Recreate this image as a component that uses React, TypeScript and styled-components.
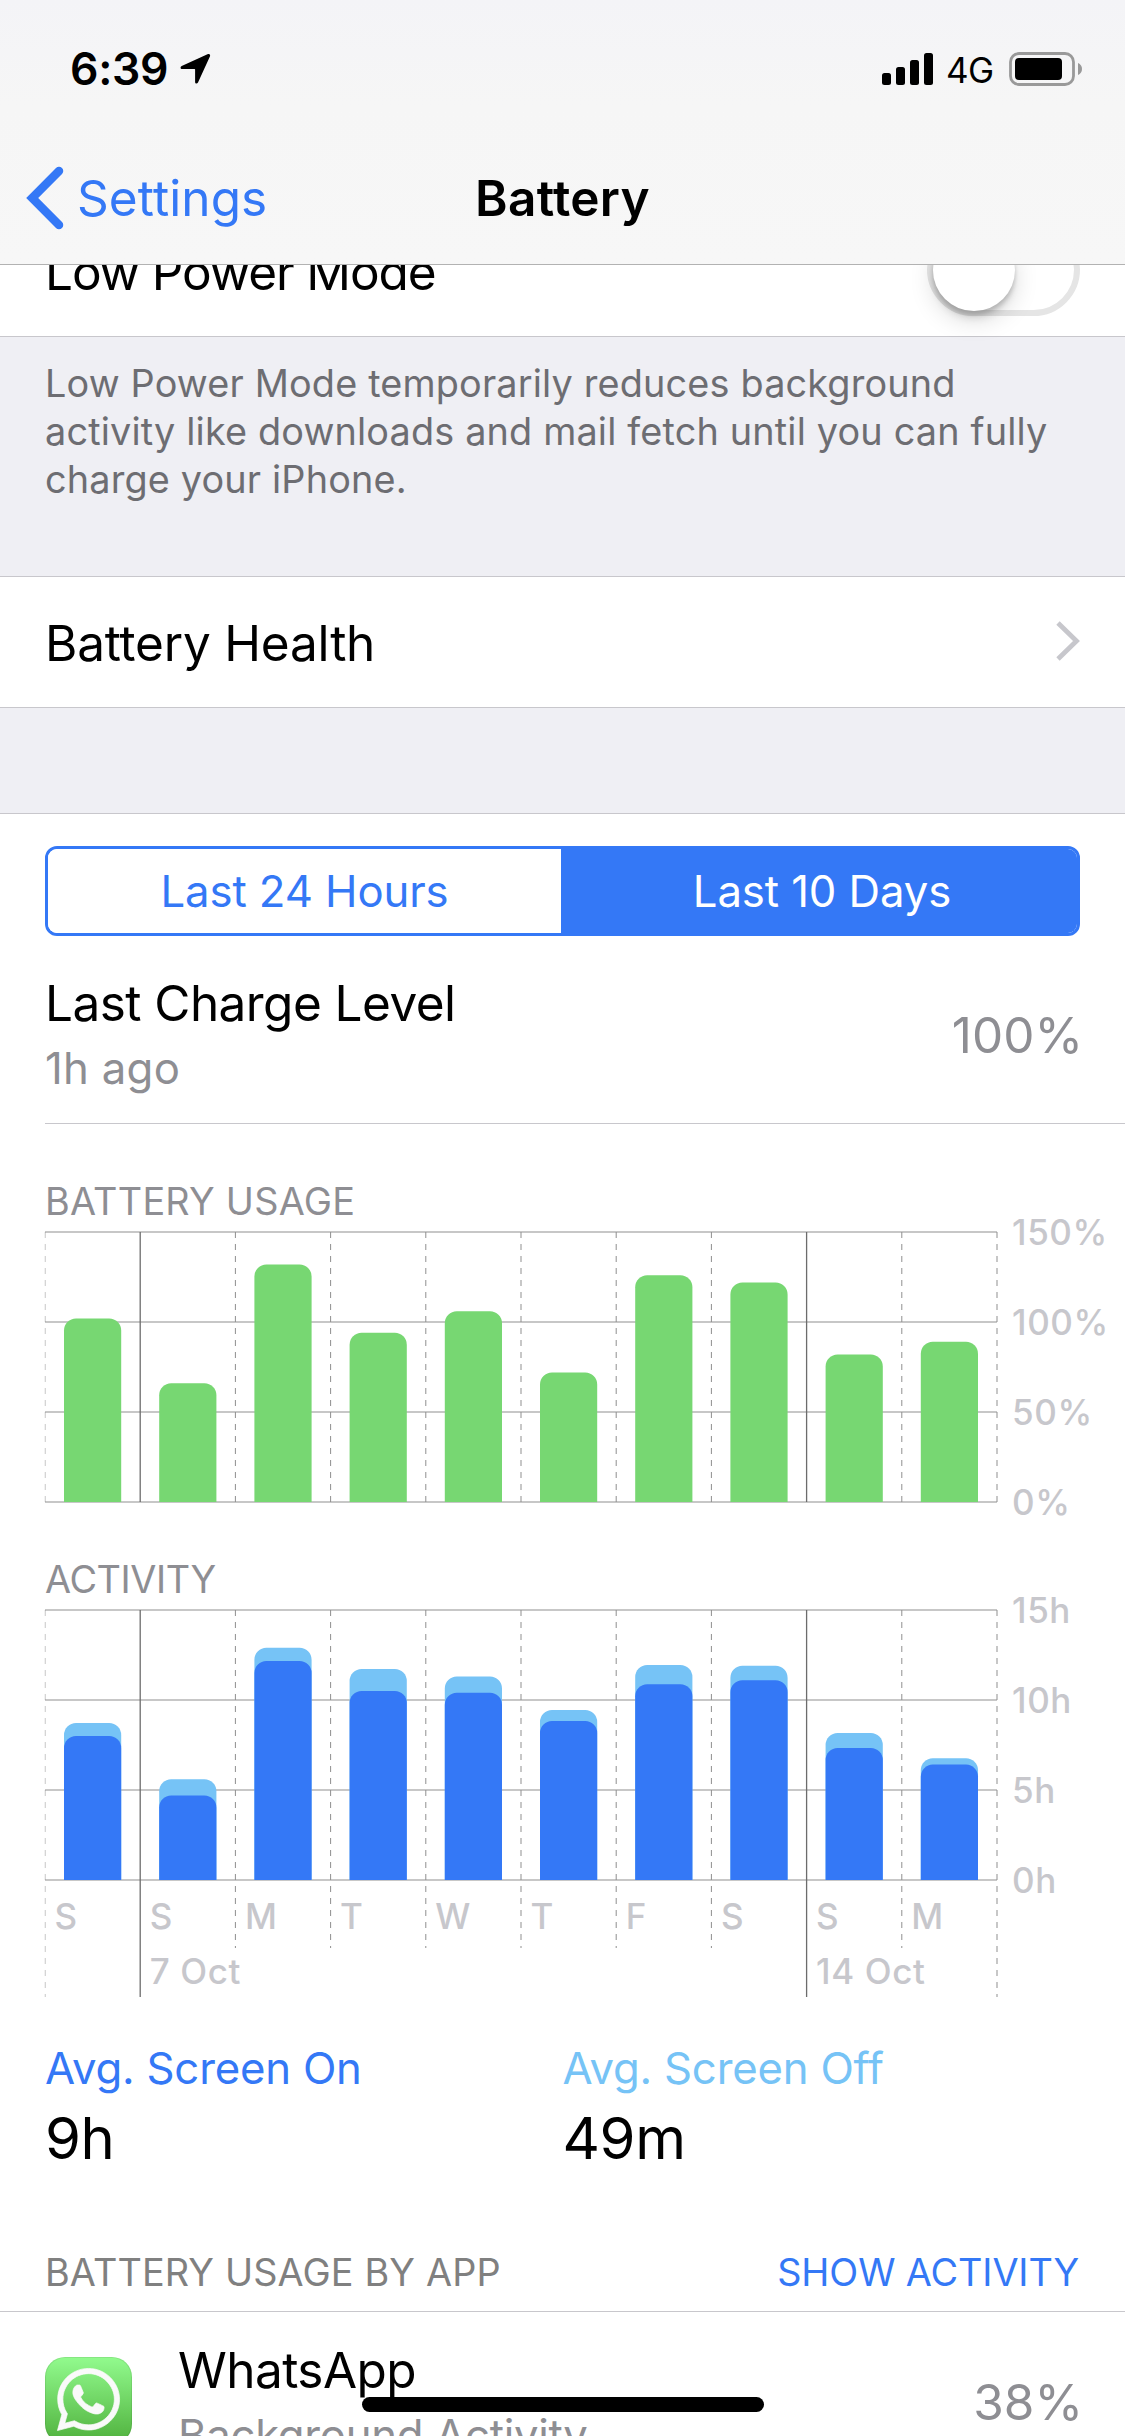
import styled, { createGlobalStyle } from 'styled-components'
import { FaWhatsapp } from 'react-icons/fa'

const colors = {
  blue: '#3478f6',
  sky: '#76c3f6',
  green: '#77d772',
  text: '#000',
  gray: '#8e8e93',
  note: '#6d6d72',
  axis: '#c7c7cc',
  separator: '#c8c7cc',
  grid: '#8f8f8f',
  page: '#efeff4',
}

const fontFamily = "Inter, 'Liberation Sans', sans-serif"

const GlobalStyle = createGlobalStyle`
  * {
    box-sizing: border-box;
  }
  body {
    margin: 0;
    background: ${colors.page};
    font-family: ${fontFamily};
    color: ${colors.text};
  }
`

const Screen = styled.div`
  position: relative;
  display: flex;
  flex-direction: column;
  width: 1125px;
  height: 2436px;
  overflow: hidden;
  background: ${colors.page};
`

const Header = styled.header`
  position: relative;
  z-index: 1;
  flex: none;
  height: 265px;
  background: linear-gradient(#f4f4f7, #f6f6f6 40%, #f7f7f7);
  border-bottom: 1px solid #b2b2b2;
`

const StatusBar = styled.div`
  display: flex;
  align-items: center;
  height: 132px;
  padding: 6px 42px 0 70px;
`

const Time = styled.span`
  width: 110px;
  font-size: 44.5px;
  font-weight: 600;
  line-height: 54px;
  letter-spacing: -0.3px;
`

const StatusIcons = styled.div`
  display: flex;
  align-items: center;
  margin-left: auto;
`

const Network = styled.span`
  width: 75px;
  padding: 2px 0 0 12px;
  font-size: 35px;
  line-height: 42px;
  letter-spacing: -0.5px;
`

const NavBar = styled.nav`
  display: grid;
  grid-template-columns: 1fr auto 1fr;
  align-items: center;
  height: 132px;
  padding: 0 25px;
`

const BackButton = styled.a`
  display: flex;
  align-items: center;
  gap: 13px;
  font-size: 49.5px;
  line-height: 60px;
  letter-spacing: 0.1px;
  color: ${colors.blue};
`

const NavTitle = styled.h1`
  margin: 0;
  font-size: 49.5px;
  font-weight: 600;
  line-height: 60px;
  letter-spacing: 0.3px;
`

const Cell = styled.div<{ $scrolled?: boolean }>`
  display: flex;
  flex: none;
  align-items: center;
  justify-content: space-between;
  height: 132px;
  margin-top: ${(p) => (p.$scrolled ? '-60px' : '0')};
  padding: 2px 45px 0;
  background: #fff;
  border: solid ${colors.separator};
  border-width: 1px 0;
`

const CellTitle = styled.span<{ $track?: number }>`
  font-size: 49.5px;
  line-height: 60px;
  letter-spacing: ${(p) => p.$track ?? -0.55}px;
`

const Switch = styled.div`
  width: 153px;
  height: 93px;
  margin-top: -5px;
  border: 6px solid #e5e5e5;
  border-radius: 47px;
`

const Knob = styled.div`
  width: 82px;
  height: 82px;
  border-radius: 50%;
  background: #fff;
  box-shadow:
    0 9px 24px rgba(0, 0, 0, 0.15),
    0 4px 4px rgba(0, 0, 0, 0.16),
    0 9px 6px rgba(0, 0, 0, 0.06);
`

const ChevronIcon = styled.svg`
  margin-top: -4px;
`

const Note = styled.p`
  flex: none;
  height: 239px;
  margin: 0;
  padding: 22px 45px 0;
  font-size: 37.8px;
  line-height: 48px;
  letter-spacing: 0.17px;
  color: ${colors.note};
`

const Panel = styled.section`
  display: flex;
  flex: none;
  flex-direction: column;
  margin-top: 105px;
  padding-top: 32px;
  background: #fff;
  border-top: 1px solid ${colors.separator};
`

const Segmented = styled.div`
  display: grid;
  grid-template-columns: 513px 1fr;
  height: 90px;
  margin: 0 45px;
  overflow: hidden;
  border: 3px solid ${colors.blue};
  border-radius: 12px;
`

const Segment = styled.button<{ $active?: boolean }>`
  padding: 2px 0 0;
  border: 0;
  font-family: inherit;
  font-size: 43.7px;
  line-height: 54px;
  letter-spacing: -0.1px;
  background: ${(p) => (p.$active ? colors.blue : '#fff')};
  color: ${(p) => (p.$active ? '#fff' : colors.blue)};
  padding-left: ${(p) => (p.$active ? '6px' : '0')};
`

const ChargeRow = styled.div`
  display: flex;
  align-items: center;
  justify-content: space-between;
  height: 188px;
  margin-left: 45px;
  padding: 10px 45px 0 0;
  border-bottom: 1px solid ${colors.separator};
`

const Stack = styled.div`
  display: flex;
  flex-direction: column;
  gap: 9px;
`

const Subtitle = styled.span<{ $track?: number }>`
  font-size: 43.7px;
  line-height: 54px;
  letter-spacing: ${(p) => p.$track ?? -0.3}px;
  color: ${colors.gray};
`

const Value = styled.span`
  margin: 0 -3px 0 auto;
  font-size: 49.5px;
  line-height: 60px;
  letter-spacing: 0;
  color: ${colors.gray};
`

const ChartTitle = styled.h2<{ $top: number; $track: number }>`
  margin: ${(p) => p.$top}px 0 0 45px;
  font-size: 37.8px;
  font-weight: 400;
  line-height: 48px;
  letter-spacing: ${(p) => p.$track}px;
  color: ${colors.gray};
`

const Plot = styled.svg`
  display: block;
  margin-left: 45px;
  overflow: visible;
`

const PlotText = styled.text`
  font-family: ${fontFamily};
  font-size: 35px;
  font-weight: 500;
  letter-spacing: 0.6px;
  fill: ${colors.axis};
`

const Averages = styled.div`
  display: grid;
  grid-template-columns: 1fr 1fr;
  margin: 42px 45px 0;
`

const AverageLabel = styled.div<{ $color: string }>`
  font-size: 43.7px;
  line-height: 54px;
  letter-spacing: -0.2px;
  color: ${(p) => p.$color};
`

const AverageValue = styled.div`
  height: 77px;
  padding-top: 6px;
  font-size: 58px;
  line-height: 72px;
  letter-spacing: -0.4px;
`

const ListHeader = styled.div`
  display: flex;
  justify-content: space-between;
  height: 139px;
  padding: 75px 46px 0 45px;
  font-size: 37.8px;
  line-height: 48px;
  letter-spacing: 0.14px;
  color: #808080;
  border-bottom: 1px solid ${colors.separator};
`

const LinkText = styled.span`
  letter-spacing: -0.1px;
  color: ${colors.blue};
`

const AppRow = styled.div`
  display: flex;
  align-items: center;
  height: 177px;
  padding: 2px 45px 0;
`

const AppIcon = styled.div`
  display: flex;
  align-items: center;
  justify-content: center;
  width: 87px;
  height: 87px;
  margin: -2px 46px 0 0;
  padding-bottom: 2px;
  border-radius: 20px;
  background: linear-gradient(#92fb8e, #4fb03c);
  box-shadow: inset 0 0 0 1px rgba(0, 0, 0, 0.08);
  color: #fafafa;
`

const HomeIndicator = styled.div`
  position: absolute;
  bottom: 24px;
  left: 362px;
  width: 402px;
  height: 15px;
  border-radius: 8px;
  background: #000;
`

interface Day {
  label: string
  usage: number
  screenOn: number
  total: number
  date?: string
}

const days: Day[] = [
  { label: 'S', usage: 102, screenOn: 8, total: 8.72 },
  { label: 'S', usage: 66, screenOn: 4.7, total: 5.6, date: '7 Oct' },
  { label: 'M', usage: 132, screenOn: 12.17, total: 12.9 },
  { label: 'T', usage: 94, screenOn: 10.5, total: 11.72 },
  { label: 'W', usage: 106, screenOn: 10.4, total: 11.3 },
  { label: 'T', usage: 72, screenOn: 8.83, total: 9.44 },
  { label: 'F', usage: 126, screenOn: 10.87, total: 11.94 },
  { label: 'S', usage: 122, screenOn: 11.1, total: 11.9 },
  { label: 'S', usage: 82, screenOn: 7.33, total: 8.17, date: '14 Oct' },
  { label: 'M', usage: 89, screenOn: 6.41, total: 6.76 },
]

const COLUMN = 95.2
const PLOT_WIDTH = COLUMN * days.length
const PLOT_HEIGHT = 270
const BAR_WIDTH = 57.2

// bar with only its top corners rounded
const barPath = (column: number, base: number, height: number) => {
  const x = column * COLUMN + 19
  const r = 12
  return `M${x} ${base}v${r - height}a${r} ${r} 0 0 1 ${r} ${-r}h${BAR_WIDTH - 2 * r}a${r} ${r} 0 0 1 ${r} ${r}v${height - r}z`
}

interface ChartProps {
  top: number
  height: number
  max: number
  ticks: string[]
  series: { color: string; values: number[] }[]
  showDays?: boolean
}

const Chart = ({ top, height, max, ticks, series, showDays }: ChartProps) => {
  const base = top + PLOT_HEIGHT

  const lineEnd = (index: number) => {
    if (!showDays) return base
    const long = index === 0 || index === days.length || days[index].date
    return base + (long ? 117 : 68)
  }

  return (
    <Plot width={1080} height={height}>
      {ticks.map((tick, i) => {
        const y = top + i * 90
        return (
          <g key={tick}>
            <line x1={0} x2={PLOT_WIDTH} y1={y} y2={y} stroke={colors.grid} />
            <PlotText x={967} y={y + 12.5}>
              {tick}
            </PlotText>
          </g>
        )
      })}
      {Array.from({ length: days.length + 1 }, (_, i) => {
        const solid = Boolean(days[i]?.date)
        const x = i === 0 ? 0.25 : i * COLUMN
        const width = i === 0 ? 0.5 : 1
        return (
          <line
            key={i}
            x1={x}
            x2={x}
            y1={top}
            y2={lineEnd(i)}
            stroke={solid ? '#6c6c6c' : colors.grid}
            strokeWidth={solid ? 1.3 : width}
            strokeDasharray={solid ? undefined : '6 6'}
          />
        )
      })}
      {series.map(({ color, values }) =>
        values.map((value, i) => (
          <path
            key={color + i}
            d={barPath(i, base, (value / max) * PLOT_HEIGHT)}
            fill={color}
          />
        ))
      )}
      {showDays &&
        days.map((day, i) => (
          <g key={i}>
            <PlotText x={i * COLUMN + 9.5} y={base + 49}>
              {day.label}
            </PlotText>
            {day.date && (
              <PlotText x={i * COLUMN + 9.5} y={base + 104}>
                {day.date}
              </PlotText>
            )}
          </g>
        ))}
    </Plot>
  )
}

const SignalIcon = () => (
  <svg width={52} height={34} viewBox="0 0 52 34">
    <rect x={0} y={21} width={9} height={12} rx={2.5} />
    <rect x={14} y={15} width={9} height={18} rx={2.5} />
    <rect x={28} y={8} width={9} height={25} rx={2.5} />
    <rect x={42} y={1} width={9} height={32} rx={2.5} />
  </svg>
)

const BatteryIcon = () => (
  <svg width={74} height={34} viewBox="0 0 74 34">
    <rect
      x={1.5}
      y={1.5}
      width={63}
      height={31}
      rx={8.5}
      fill="none"
      stroke="#999"
      strokeWidth={2.8}
    />
    <rect x={6} y={6} width={47} height={22} rx={4} />
    <path d="M69 11c2.600 1 4 3.400 4 6s-1.400 5-4 6z" fill="#999" />
  </svg>
)

const LocationIcon = () => (
  <svg width={31} height={32} viewBox="0 0 31 32">
    <path d="M27.500 1.200c1.800-.8 3.200.5 2.400 2.400L18 29.500c-.8 1.700-2.900 1.400-2.900-.5V16.600c0-.4-.2-.6-.6-.6H2.200c-1.900 0-2.300-2-.5-2.900z" />
  </svg>
)

export default function App() {
  return (
    <>
      <GlobalStyle />
      <Screen>
        <Header>
          <StatusBar>
            <Time>6:39</Time>
            <LocationIcon />
            <StatusIcons>
              <SignalIcon />
              <Network>4G</Network>
              <BatteryIcon />
            </StatusIcons>
          </StatusBar>
          <NavBar>
            <BackButton>
              <svg width={39} height={64} viewBox="0 0 39 64">
                <path
                  d="M34 5L7.200 32 34 59"
                  fill="none"
                  stroke={colors.blue}
                  strokeWidth={8.5}
                  strokeLinecap="round"
                />
              </svg>
              Settings
            </BackButton>
            <NavTitle>Battery</NavTitle>
          </NavBar>
        </Header>

        <Cell $scrolled>
          <CellTitle $track={-1.1}>Low Power Mode</CellTitle>
          <Switch>
            <Knob />
          </Switch>
        </Cell>
        <Note>
          Low Power Mode temporarily reduces background
          <br />
          activity like downloads and mail fetch until you can fully
          <br />
          charge your iPhone.
        </Note>
        <Cell>
          <CellTitle $track={-0.2}>Battery Health</CellTitle>
          <ChevronIcon width={25} height={40} viewBox="0 0 25 40">
            <path
              d="M3 2L21.500 20 3 38"
              fill="none"
              stroke={colors.axis}
              strokeWidth={4.8}
            />
          </ChevronIcon>
        </Cell>

        <Panel>
          <Segmented>
            <Segment>Last 24 Hours</Segment>
            <Segment $active>Last 10 Days</Segment>
          </Segmented>
          <ChargeRow>
            <Stack>
              <CellTitle>Last Charge Level</CellTitle>
              <Subtitle $track={0.3}>1h ago</Subtitle>
            </Stack>
            <Value>100%</Value>
          </ChargeRow>

          <ChartTitle $top={53} $track={0.25}>
            BATTERY USAGE
          </ChartTitle>
          <Chart
            top={7}
            height={290}
            max={150}
            ticks={['150%', '100%', '50%', '0%']}
            series={[{ color: colors.green, values: days.map((d) => d.usage) }]}
          />
          <ChartTitle $top={40} $track={-0.4}>
            ACTIVITY
          </ChartTitle>
          <Chart
            top={7}
            height={397}
            max={15}
            ticks={['15h', '10h', '5h', '0h']}
            series={[
              { color: colors.sky, values: days.map((d) => d.total) },
              { color: colors.blue, values: days.map((d) => d.screenOn) },
            ]}
            showDays
          />

          <Averages>
            <div>
              <AverageLabel $color={colors.blue}>Avg. Screen On</AverageLabel>
              <AverageValue>9h</AverageValue>
            </div>
            <div>
              <AverageLabel $color={colors.sky}>Avg. Screen Off</AverageLabel>
              <AverageValue>49m</AverageValue>
            </div>
          </Averages>

          <ListHeader>
            <span>BATTERY USAGE BY APP</span>
            <LinkText>SHOW ACTIVITY</LinkText>
          </ListHeader>
          <AppRow>
            <AppIcon>
              <FaWhatsapp size={71} stroke="currentColor" strokeWidth={5} />
            </AppIcon>
            <Stack>
              <CellTitle>WhatsApp</CellTitle>
              <Subtitle>Background Activity</Subtitle>
            </Stack>
            <Value>38%</Value>
          </AppRow>
        </Panel>
        <HomeIndicator />
      </Screen>
    </>
  )
}
